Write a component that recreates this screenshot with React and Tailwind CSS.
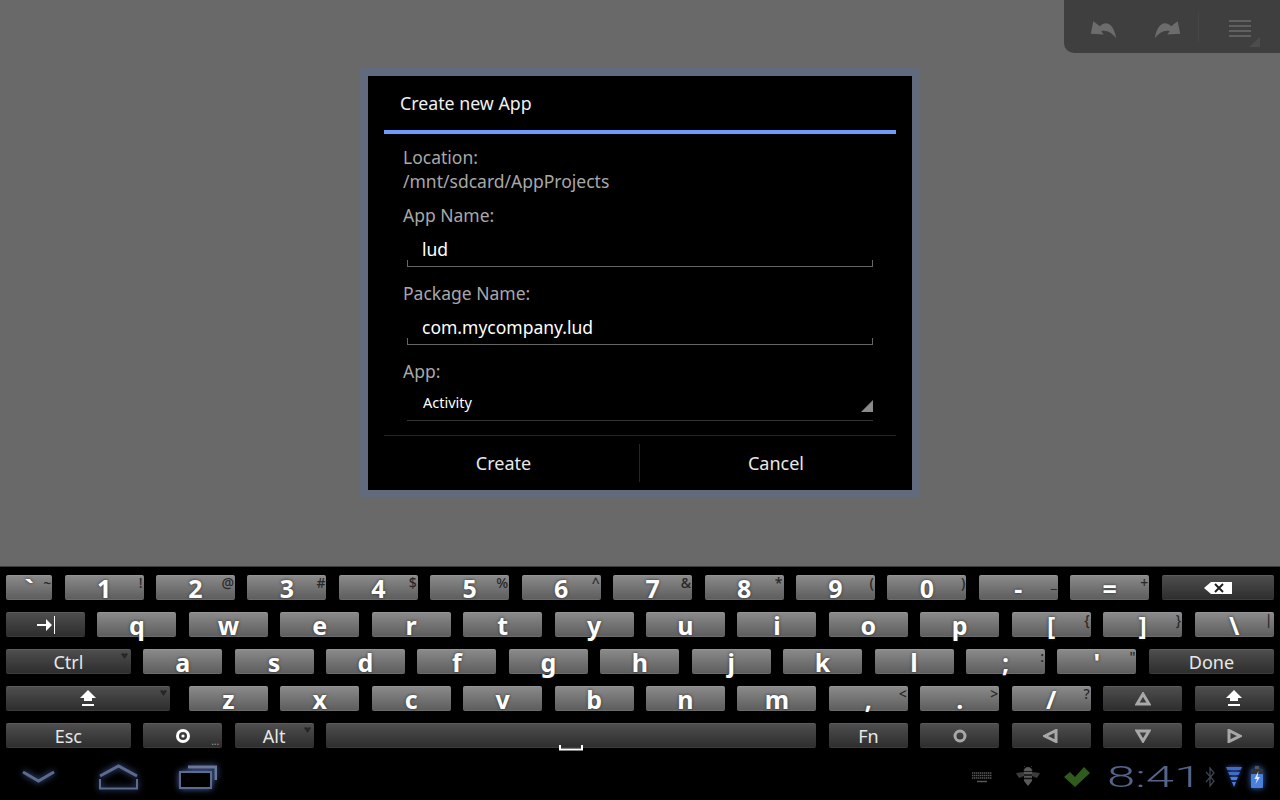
function Mark() {
  return (
    <svg className="absolute right-[3px] top-[3px]" width="7" height="6" viewBox="0 0 7 6">
      <path d="M0 1 L2 0 L3.5 1 L5 0 L7 1 L3.5 6 Z" fill="#262626" />
    </svg>
  );
}

function Shift() {
  return (
    <svg width="18" height="17" viewBox="0 0 18 17">
      <path d="M9 0 L17 8 L13 8 L13 11 L5 11 L5 8 L1 8 Z" fill="#fff" />
      <rect x="3" y="14" width="12" height="2" fill="#fff" />
    </svg>
  );
}

function Arrow({ d }) {
  return (
    <svg width="16" height="14" viewBox="0 0 16 14">
      <path d={d} fill="none" stroke="#a8a8a8" strokeWidth="3" />
    </svg>
  );
}

function Key({ w = "w-[79px]", dark, alt, children, letter, cls = "" }) {
  return (
    <div
      className={`relative h-[25px] shrink-0 flex justify-center rounded-[2px] border-t border-b ${w} ${cls} ${
        dark
          ? "items-center bg-gradient-to-b from-[#4e4e4e] to-[#2e2e2e] border-t-[#5c5c5c] border-b-[#3c3c3c]"
          : "items-end bg-gradient-to-b from-[#8a8a8a] to-[#5e5e5e] border-t-[#949494] border-b-[#6c6c6c]"
      }`}
    >
      {letter ? (
        <span className="translate-y-px text-[25px] leading-6 font-bold text-white [text-shadow:0_0_3px_#2a2a2a]">{letter}</span>
      ) : (
        children
      )}
      {alt && <span className="absolute right-[1px] top-[-2px] text-[14px] leading-[18px] font-medium text-[#282828]">{alt}</span>}
    </div>
  );
}

function Label({ children }) {
  return <span className="text-[18px] leading-6 text-[#e8e8e8]">{children}</span>;
}

function Row({ children }) {
  return <div className="flex gap-[12.43px]">{children}</div>;
}

function Field({ label, value }) {
  return (
    <>
      <div className="h-6 leading-6 pl-[35px] text-[#a8a8a8] text-[17.5px]">{label}</div>
      <div className="relative mx-[39px] h-[40px] pt-[10px] pl-[15px] text-[17.5px] leading-6 text-white border-b border-b-[#666]">
        {value}
        <span className="absolute left-0 bottom-0 w-px h-[6px] bg-[#666]" />
        <span className="absolute right-0 bottom-0 w-px h-[6px] bg-[#666]" />
      </div>
    </>
  );
}

function Undo({ cls }) {
  return (
    <svg width="27" height="19" viewBox="28 26 82 58" className={cls}>
      <path d="M30 68 L38 30 L58 45 C80 25 100 40 108 82 C95 65 78 55 62 60 L70 70 Z" fill="#6c6c6c" />
    </svg>
  );
}

export default function App() {
  return (
    <div className="w-[1280px] h-[800px] overflow-hidden flex flex-col bg-black font-['Noto_Sans',sans-serif]">
      <div className="relative h-[567px] bg-[#696969] flex items-center justify-center border-b border-b-[#3c3c3c]">
        {/* toolbar, dimmed by the dialog */}
        <div className="absolute right-0 top-0 w-[216px] h-[53px] bg-[#3f3f3f] rounded-bl-[10px] flex items-center pl-[26px]">
          <Undo cls="mt-[5px]" />
          <Undo cls="mt-[5px] ml-[37px] -scale-x-100" />
          <div className="w-px h-[30px] bg-[#464646] ml-[17px]" />
          <div className="ml-[30px] mt-[4px] w-[22px] flex flex-col gap-[3px]">
            <div className="h-[2px] bg-[#606060]" />
            <div className="h-[2px] bg-[#606060]" />
            <div className="h-[2px] bg-[#606060]" />
            <div className="h-[2px] bg-[#606060]" />
          </div>
          <svg className="absolute right-[20px] bottom-[6px]" width="11" height="10" viewBox="0 0 11 10">
            <path d="M0 10 L11 0 L11 10 Z" fill="#4c4c4c" />
          </svg>
        </div>

        {/* dialog */}
        <div className="w-[560px] h-[430px] border-[8px] border-[#626b7e] rounded-[4px] bg-black flex flex-col">
          <div className="h-[54px] pl-[32px] pt-[15px] text-[17.75px] leading-6 text-[#f0f0f0]">Create new App</div>
          <div className="mx-4 h-1 bg-[#6b9bff]" />
          <div className="pt-[11px] h-[301px]">
            <div className="pl-[35px] text-[17.5px] leading-6 text-[#a8a8a8]">Location:</div>
            <div className="pl-[35px] text-[17.5px] leading-6 text-[#a8a8a8]">/mnt/sdcard/AppProjects</div>
            <div className="h-[10px]" />
            <Field label="App Name:" value="lud" />
            <div className="h-[14px]" />
            <Field label="Package Name:" value="com.mycompany.lud" />
            <div className="h-[14px]" />
            <div className="h-6 leading-6 pl-[35px] text-[#a8a8a8] text-[17.5px]">App:</div>
            <div className="relative mx-[39px] h-[38px] pt-[7px] pl-4 text-[14.5px] leading-6 text-white border-b border-b-[#333]">
              Activity
              <svg className="absolute right-0 top-[17px]" width="12" height="12" viewBox="0 0 12 12">
                <path d="M0 12 L12 0 L12 12 Z" fill="#8a8a8a" />
              </svg>
            </div>
          </div>
          <div className="mx-4 h-px bg-[#262626]" />
          <div className="h-[54px] flex items-center text-[18px] text-[#e8e8e8]">
            <div className="w-[271px] text-center">Create</div>
            <div className="w-px h-[38px] bg-[#262626]" />
            <div className="flex-1 text-center">Cancel</div>
          </div>
        </div>
      </div>

      {/* keyboard */}
      <div className="px-[6px] pt-2 flex flex-col gap-3">
        <Row>
          <Key w="w-[46.16px]" letter="`" alt="~" />
          <Key letter="1" alt="!" />
          <Key letter="2" alt="@" />
          <Key letter="3" alt="#" />
          <Key letter="4" alt="$" />
          <Key letter="5" alt="%" />
          <Key letter="6" alt="^" />
          <Key letter="7" alt="&" />
          <Key letter="8" alt="*" />
          <Key letter="9" alt="(" />
          <Key letter="0" alt=")" />
          <Key letter="-" alt="_" />
          <Key letter="=" alt="+" />
          <Key w="w-[112.3px]" dark>
            <svg width="28" height="12" viewBox="0 0 28 12">
              <path d="M0 6 L7 0 L28 0 L28 12 L7 12 Z" fill="#fff" />
              <path d="M11 2 L19 10 M19 2 L11 10" stroke="#222" strokeWidth="2" />
            </svg>
          </Key>
        </Row>
        <Row>
          <Key dark>
            <svg width="18" height="20" viewBox="0 0 18 20">
              <path d="M0 9 L9 9 L9 4 L15 10 L9 16 L9 11 L0 11 Z" fill="#fff" />
              <rect x="17" y="1" width="1" height="18" fill="#fff" />
            </svg>
          </Key>
          {"qwertyuiop".split("").map((c) => (
            <Key key={c} letter={c} />
          ))}
          <Key letter="[" alt="{" />
          <Key letter="]" alt="}" />
          <Key letter="\" alt="|" cls="ml-[0.1px]" />
        </Row>
        <Row>
          <Key w="w-[124.75px]" dark>
            <Label>Ctrl</Label>
            <Mark />
          </Key>
          {"asdfghjkl".split("").map((c) => (
            <Key key={c} letter={c} />
          ))}
          <Key letter=";" alt=":" />
          <Key letter="'" alt={'"'} />
          <Key w="w-[125.25px]" dark>
            <Label>Done</Label>
          </Key>
        </Row>
        <Row>
          <Key w="w-[164px]" cls="mr-[6.43px]" dark>
            <Shift />
            <Mark />
          </Key>
          {"zxcvbnm".split("").map((c) => (
            <Key key={c} letter={c} />
          ))}
          <Key letter="," alt="<" />
          <Key letter="." alt=">" />
          <Key letter="/" alt="?" />
          <Key dark>
            <Arrow d="M8 2 L14 12 L2 12 Z" />
          </Key>
          <Key dark cls="ml-[0.1px]">
            <Shift />
          </Key>
        </Row>
        <Row>
          <Key w="w-[124.75px]" dark>
            <Label>Esc</Label>
          </Key>
          <Key dark>
            <svg width="16" height="16" viewBox="0 0 16 16">
              <circle cx="8" cy="8" r="5.5" fill="none" stroke="#fff" strokeWidth="3" />
              <circle cx="8" cy="8" r="1.6" fill="#fff" />
            </svg>
            <span className="absolute right-[3px] bottom-[1px] text-[10px] leading-[10px] text-[#999]">...</span>
          </Key>
          <Key dark>
            <Label>Alt</Label>
            <Mark />
          </Key>
          <Key w="w-[490.45px]" dark>
            <svg className="absolute left-[233px] top-[21px]" width="24" height="6" viewBox="0 0 24 6">
              <path d="M1 0 L1 4.5 L23 4.5 L23 0" fill="none" stroke="#fff" strokeWidth="2" />
            </svg>
          </Key>
          <Key dark>
            <Label>Fn</Label>
          </Key>
          <Key dark>
            <svg width="14" height="14" viewBox="0 0 14 14">
              <circle cx="7" cy="7" r="5" fill="none" stroke="#a8a8a8" strokeWidth="3" />
            </svg>
          </Key>
          <Key dark>
            <Arrow d="M2 7 L13 1.5 L13 12.5 Z" />
          </Key>
          <Key dark>
            <Arrow d="M8 12 L14 2 L2 2 Z" />
          </Key>
          <Key dark>
            <Arrow d="M14 7 L3 1.5 L3 12.5 Z" />
          </Key>
        </Row>
      </div>

      {/* system bar */}
      <div className="flex-1 flex items-center pl-[22px] pr-[17px] pt-[5px]">
        <svg width="33" height="14" viewBox="0 0 33 14" className="drop-shadow-[0_0_3px_#4a66aa]">
          <path d="M1 2 L16.5 11 L32 2" fill="none" stroke="#5d6b8e" strokeWidth="3" />
        </svg>
        <svg width="39" height="26" viewBox="0 0 39 26" className="ml-[44px] drop-shadow-[0_0_3px_#4a66aa]">
          <path d="M1 12 L19.5 2 L38 12" fill="none" stroke="#5d6b8e" strokeWidth="3" />
          <path d="M1 15 L1 24.5 L38 24.5 L38 15" fill="none" stroke="#5d6b8e" strokeWidth="2" />
        </svg>
        <svg width="38" height="24" viewBox="0 0 38 24" className="ml-[41px] drop-shadow-[0_0_3px_#4a66aa]">
          <path d="M9 2 L37 2 L37 15" fill="none" stroke="#6a7796" strokeWidth="3" />
          <rect x="1" y="7" width="31" height="16" fill="#000" stroke="#5d6b8e" strokeWidth="2" />
        </svg>

        <svg width="20" height="12" viewBox="0 0 20 12" className="ml-auto">
          <g stroke="#5a5a5a" strokeWidth="1.4" strokeDasharray="1.4 0.6">
            <path d="M0 2 L20 2" />
            <path d="M0 4.5 L20 4.5" />
            <path d="M0 7 L20 7" />
          </g>
          <path d="M5 10.5 L15 10.5" stroke="#5a5a5a" strokeWidth="1.4" />
        </svg>
        <svg width="24" height="21" viewBox="0 0 24 21" className="ml-[24px]">
          <path d="M0 7 L8 6 L8 10 L3 12 Z M24 7 L16 6 L16 10 L21 12 Z" fill="#3c3c3c" />
          <path d="M8 5 C8 0 16 0 16 5 Z M9 1 L8 0 M15 1 L16 0" fill="#5a5a5a" stroke="#5a5a5a" strokeWidth="0.6" />
          <path d="M8 6 L16 6 L16 15 L12 20 L8 15 Z" fill="#5a5a5a" />
          <path d="M8 9 L16 9 M8 12.5 L16 12.5" stroke="#111" strokeWidth="1.5" />
        </svg>
        <svg width="26" height="20" viewBox="0 0 26 20" className="ml-[24px]">
          <path d="M0 10 L6 5 L11 10 L20 0 L26 6 L11 20 Z" fill="#2f5c1c" />
        </svg>
        <span className="ml-[17px] mr-[1px] mt-[1px] w-[97px] h-[32px] text-[29px] leading-[32px] font-light text-[#55648a] font-['Roboto',sans-serif] origin-left scale-x-[1.75] whitespace-nowrap">
          8:41
        </span>
        <svg width="10" height="20" viewBox="0 0 10 20">
          <path d="M1 5 L9 14 L5 19 L5 1 L9 6 L1 15" fill="none" stroke="#3d4350" strokeWidth="1.3" />
        </svg>
        <svg width="16" height="20" viewBox="0 0 16 20" className="ml-[11px] drop-shadow-[0_0_2px_#3a5cc0]">
          <path d="M0 0 L16 0 L14.6 3 L1.4 3 Z M2 5 L14 5 L12.6 8 L3.4 8 Z" fill="#3f6cc4" />
          <path d="M4 10 L12 10 L10.6 13 L5.4 13 Z M6 15 L10 15 L8 20 Z" fill="#4a7fe0" />
        </svg>
        <svg width="12" height="22" viewBox="0 0 12 22" className="ml-[9px] drop-shadow-[0_0_3px_#3a6cd0]">
          <rect x="4" y="0" width="4" height="3" fill="#555" />
          <rect x="0" y="3" width="12" height="5" fill="#333" />
          <rect x="0" y="8" width="12" height="14" rx="1" fill="#4a80dc" />
          <path d="M7.5 5 L3.5 13 L6 13 L4.5 18 L9 11 L6.5 11 Z" fill="#dfeaff" />
        </svg>
      </div>
    </div>
  );
}
